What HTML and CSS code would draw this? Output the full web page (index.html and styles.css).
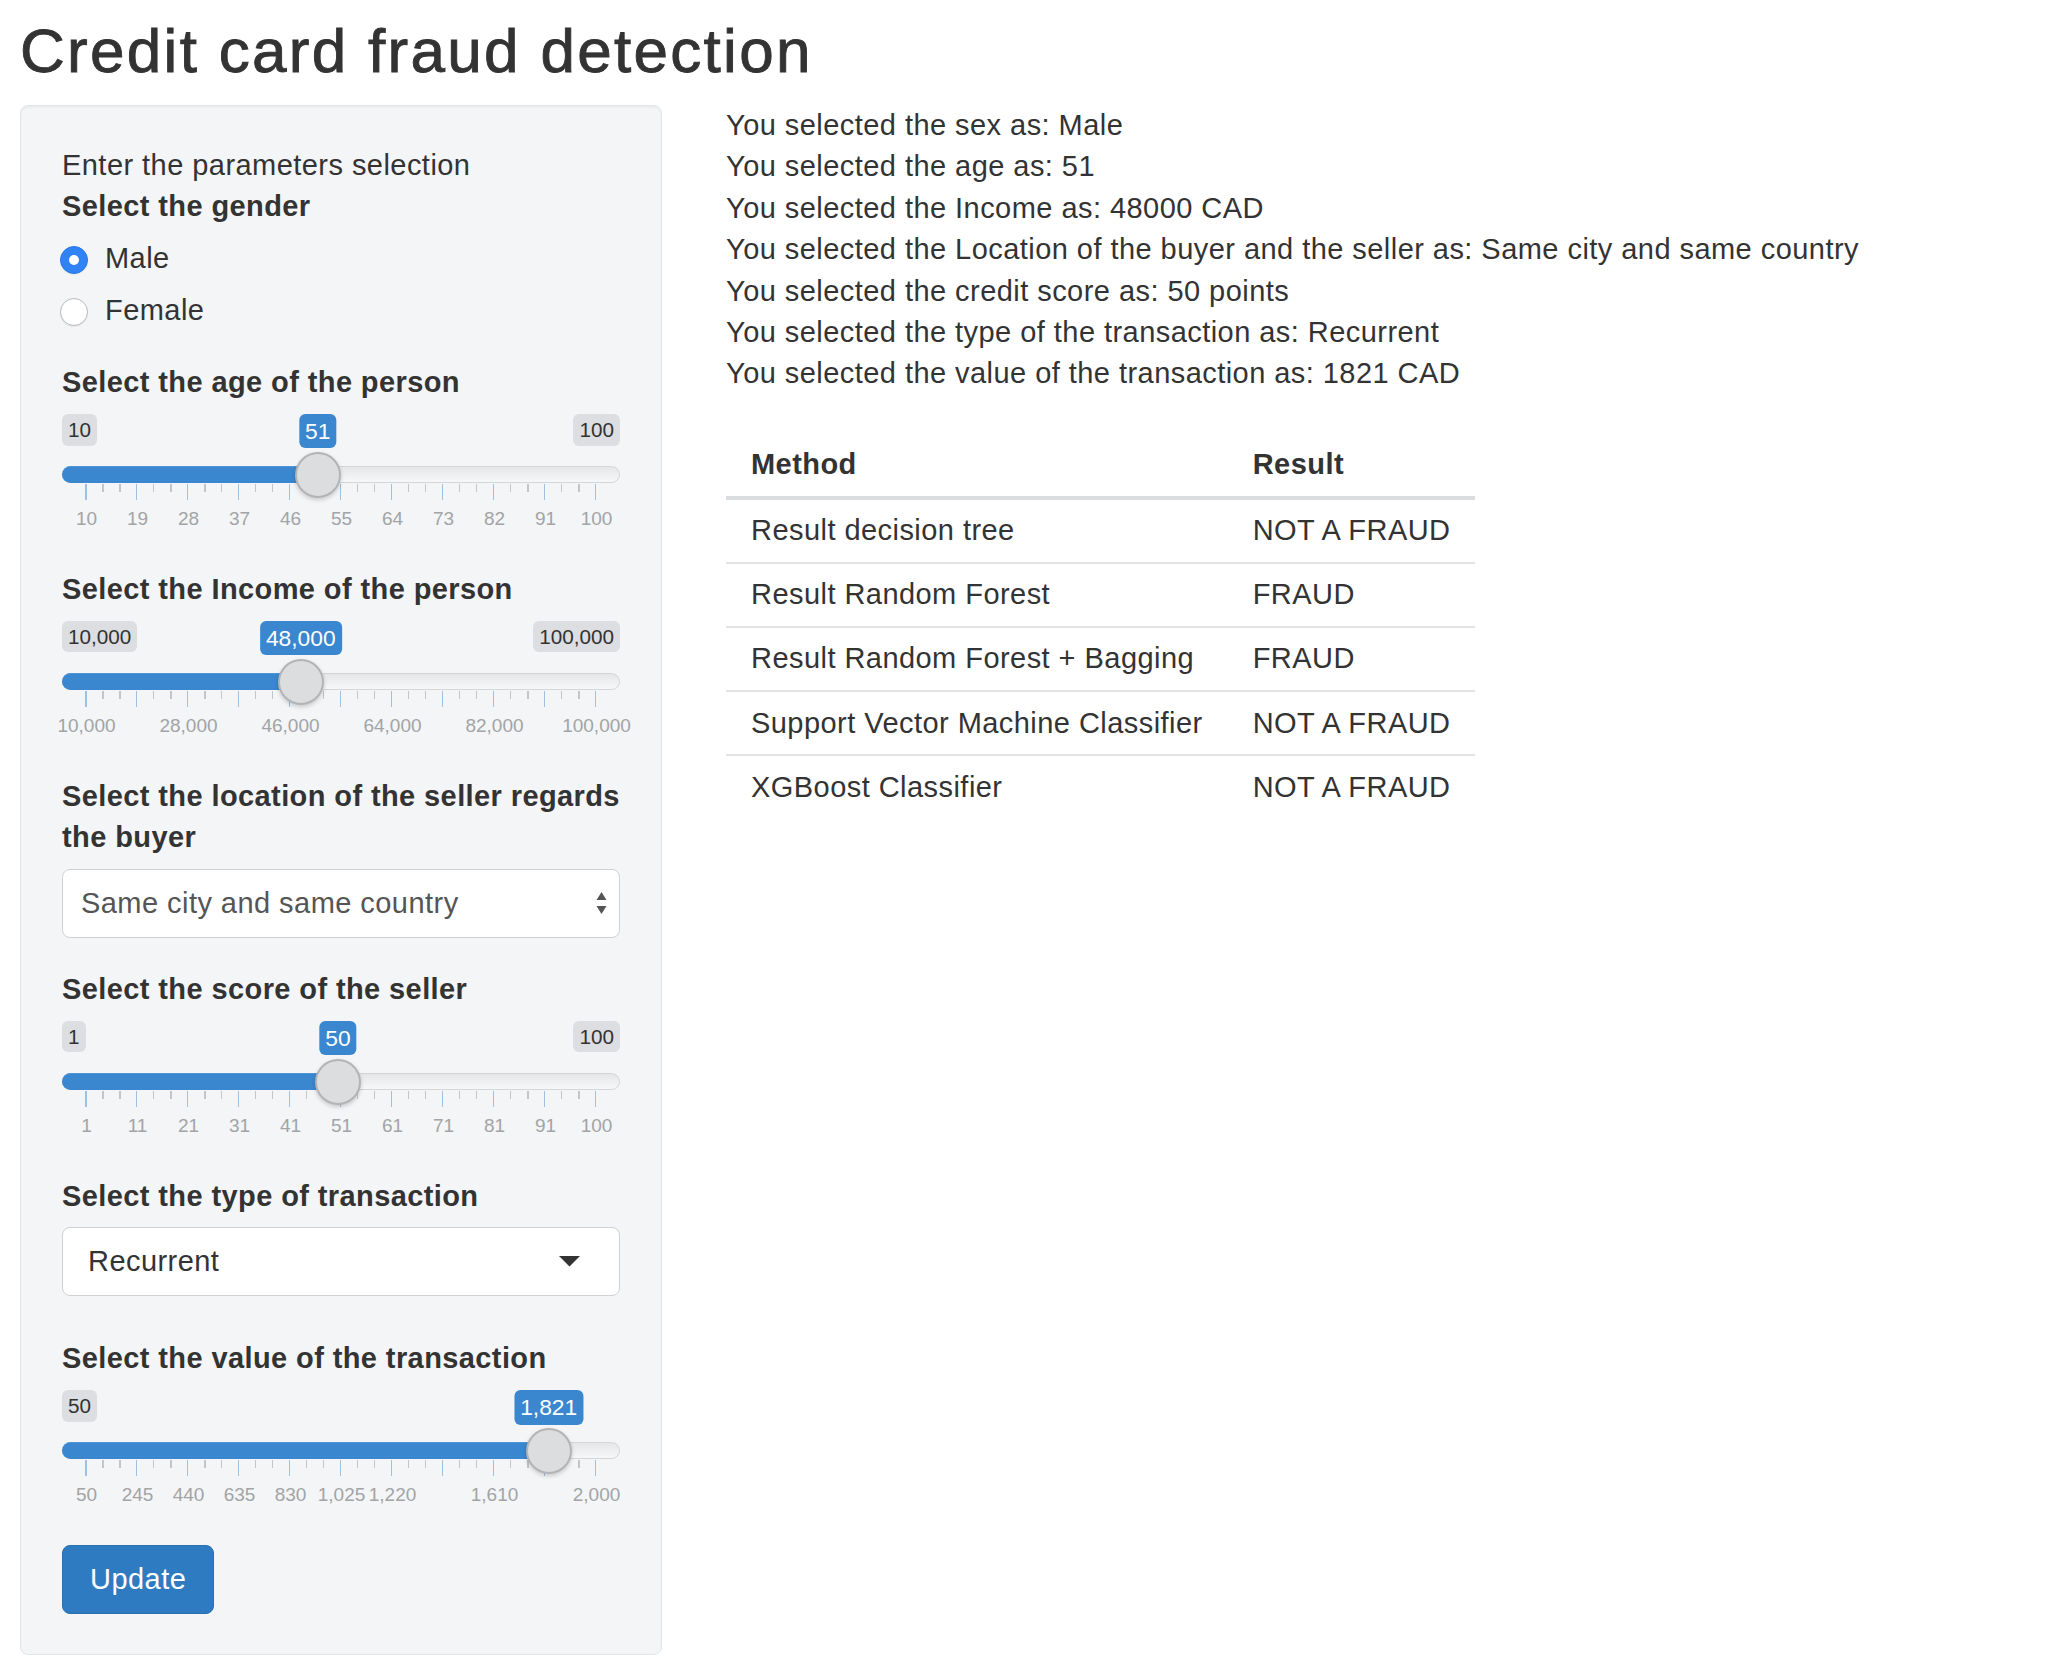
FILE: index.html
```html
<!DOCTYPE html>
<html lang="en">
<head>
<meta charset="utf-8">
<title>Credit card fraud detection</title>
<link rel="stylesheet" href="styles.css">
</head>
<body>
<div class="page">
  <h2 class="title">Credit card fraud detection</h2>
  <div class="row">
    <div class="sidebar">
      <div class="intro">Enter the parameters selection</div>

      <div class="group">
        <label class="ctl-label">Select the gender</label>
        <div class="radio"><span class="radio-dot checked"></span><span>Male</span></div>
        <div class="radio"><span class="radio-dot"></span><span>Female</span></div>
      </div>

      <div class="group">
        <label class="ctl-label">Select the age of the person</label>
        <div class="slider">
          <span class="irs-min">10</span>
          <span class="irs-max">100</span>
          <div class="irs-line"></div>
          <div class="irs-bar" style="width:255.8px"></div>
          <div class="irs-grid"></div>
          <div class="irs-labels">
            <span>10</span><span>19</span><span>28</span><span>37</span><span>46</span><span>55</span><span>64</span><span>73</span><span>82</span><span>91</span><span>100</span>
          </div>
          <span class="irs-single" style="left:255.8px">51</span>
          <span class="irs-handle" style="left:255.8px"></span>
        </div>
      </div>

      <div class="group">
        <label class="ctl-label">Select the Income of the person</label>
        <div class="slider">
          <span class="irs-min">10,000</span>
          <span class="irs-max">100,000</span>
          <div class="irs-line"></div>
          <div class="irs-bar" style="width:238.8px"></div>
          <div class="irs-grid"></div>
          <div class="irs-labels">
            <span>10,000</span><span></span><span>28,000</span><span></span><span>46,000</span><span></span><span>64,000</span><span></span><span>82,000</span><span></span><span>100,000</span>
          </div>
          <span class="irs-single" style="left:238.8px">48,000</span>
          <span class="irs-handle" style="left:238.8px"></span>
        </div>
      </div>

      <div class="group">
        <label class="ctl-label">Select the location of the seller regards the buyer</label>
        <div class="select native">
          <span class="select-text">Same city and same country</span>
          <svg class="updown" width="11" height="23" viewBox="0 0 11 23" aria-hidden="true">
            <path d="M5.5 0 L10.5 8 L0.5 8 Z" fill="#555"/>
            <path d="M0.5 14 L10.5 14 L5.5 22 Z" fill="#555"/>
          </svg>
        </div>
      </div>

      <div class="group">
        <label class="ctl-label">Select the score of the seller</label>
        <div class="slider">
          <span class="irs-min">1</span>
          <span class="irs-max">100</span>
          <div class="irs-line"></div>
          <div class="irs-bar" style="width:275.9px"></div>
          <div class="irs-grid"></div>
          <div class="irs-labels">
            <span>1</span><span>11</span><span>21</span><span>31</span><span>41</span><span>51</span><span>61</span><span>71</span><span>81</span><span>91</span><span>100</span>
          </div>
          <span class="irs-single" style="left:275.9px">50</span>
          <span class="irs-handle" style="left:275.9px"></span>
        </div>
      </div>

      <div class="group group-selectize">
        <label class="ctl-label">Select the type of transaction</label>
        <div class="select selectize">
          <span class="select-text">Recurrent</span>
          <svg class="caret" width="21" height="11" viewBox="0 0 21 11" aria-hidden="true">
            <path d="M0 0 L21 0 L10.5 10.5 Z" fill="#333"/>
          </svg>
        </div>
      </div>

      <div class="group">
        <label class="ctl-label">Select the value of the transaction</label>
        <div class="slider">
          <span class="irs-min">50</span>
          <div class="irs-line"></div>
          <div class="irs-bar" style="width:486.7px"></div>
          <div class="irs-grid"></div>
          <div class="irs-labels">
            <span>50</span><span>245</span><span>440</span><span>635</span><span>830</span><span>1,025</span><span>1,220</span><span></span><span>1,610</span><span></span><span>2,000</span>
          </div>
          <span class="irs-single" style="left:486.7px">1,821</span>
          <span class="irs-handle" style="left:486.7px"></span>
        </div>
      </div>

      <div><button class="btn-primary" type="button">Update</button></div>
    </div>

    <div class="main">
      <div class="line">You selected the sex as: Male</div>
      <div class="line">You selected the age as: 51</div>
      <div class="line">You selected the Income as: 48000 CAD</div>
      <div class="line">You selected the Location of the buyer and the seller as: Same city and same country</div>
      <div class="line">You selected the credit score as: 50 points</div>
      <div class="line">You selected the type of the transaction as: Recurrent</div>
      <div class="line">You selected the value of the transaction as: 1821 CAD</div>

      <table class="results">
        <thead>
          <tr><th>Method</th><th>Result</th></tr>
        </thead>
        <tbody>
          <tr><td>Result decision tree</td><td>NOT A FRAUD</td></tr>
          <tr><td>Result Random Forest</td><td>FRAUD</td></tr>
          <tr><td>Result Random Forest + Bagging</td><td>FRAUD</td></tr>
          <tr><td>Support Vector Machine Classifier</td><td>NOT A FRAUD</td></tr>
          <tr><td>XGBoost Classifier</td><td>NOT A FRAUD</td></tr>
        </tbody>
      </table>
    </div>
  </div>
</div>
</body>
</html>
```

FILE: styles.css
```css
* { box-sizing: border-box; }

html, body {
  margin: 0;
  padding: 0;
  background: #ffffff;
}

body {
  font-family: "Liberation Sans", Arial, Helvetica, sans-serif;
  font-size: 29px;
  line-height: 41.4px;
  letter-spacing: 0.45px;
  color: #333333;
}

.page {
  padding: 17px 0 0 20px;
}

.title {
  margin: 0 0 20px 0;
  font-size: 62px;
  line-height: 68px;
  font-weight: normal;
  letter-spacing: 2.3px;
  color: #333333;
  -webkit-text-stroke: 0.9px #333333;
}

.row {
  display: grid;
  grid-template-columns: 642px 1fr;
  column-gap: 64px;
  align-items: start;
}

/* ---------- sidebar (well) ---------- */
.sidebar {
  background: #f3f5f7;
  border: 1px solid #e2e5e8;
  border-radius: 8px;
  box-shadow: inset 0 2px 2px rgba(0, 0, 0, 0.04);
  padding: 39px 41px 40px 41px;
}

.intro {
  line-height: 41.4px;
}

.group {
  margin-bottom: 31px;
}

.group-selectize {
  margin-bottom: 42px;
}

.ctl-label {
  display: block;
  font-weight: bold;
  line-height: 41.4px;
  margin-bottom: 10.35px;
  letter-spacing: 0.4px;
}

/* radios */
.radio {
  display: flex;
  align-items: flex-start;
  line-height: 41.4px;
}

.radio + .radio {
  margin-top: 10.35px;
}

.radio-dot {
  flex: 0 0 auto;
  width: 28px;
  height: 28px;
  margin: 8px 17px 0 -2px;
  border-radius: 50%;
  background: #ffffff;
  border: 1px solid #b9b9b9;
  box-shadow: 0 1px 1px rgba(0, 0, 0, 0.06);
  position: relative;
}

.radio-dot.checked {
  background: #2f83f4;
  border-color: #2a79e4;
}

.radio-dot.checked::after {
  content: "";
  position: absolute;
  left: 50%;
  top: 50%;
  width: 10px;
  height: 10px;
  margin: -5px 0 0 -5px;
  border-radius: 50%;
  background: #ffffff;
}

/* ---------- range slider ---------- */
.slider {
  position: relative;
  height: 124px;
  letter-spacing: 0;
}

.irs-min,
.irs-max {
  position: absolute;
  top: 0;
  font-size: 20.7px;
  line-height: 27.6px;
  padding: 2px 6px;
  border-radius: 6px;
  background: #dcdee1;
  color: #333333;
}

.irs-min { left: 0; }
.irs-max { right: 0; }

.irs-single {
  position: absolute;
  top: 0;
  transform: translateX(-50%);
  font-size: 22.8px;
  line-height: 30.4px;
  padding: 2px 6px;
  border-radius: 6px;
  background: #3a87d0;
  color: #ffffff;
  white-space: nowrap;
}

.irs-line {
  position: absolute;
  left: 0;
  right: 0;
  top: 52px;
  height: 17px;
  border: 1px solid #d3d6d9;
  border-radius: 9px;
  background: linear-gradient(to bottom, #e4e6e8 0%, #f7f8f9 100%);
}

.irs-bar {
  position: absolute;
  left: 0;
  top: 52px;
  height: 17px;
  border-radius: 9px 0 0 9px;
  background: #3a87d0;
  border-top: 1px solid #4f95d6;
}

.irs-handle {
  position: absolute;
  top: 38px;
  width: 46px;
  height: 46px;
  margin-left: -23px;
  border-radius: 50%;
  background: #dcddde;
  border: 2px solid #b3b4b6;
  box-shadow: 0 2px 4px rgba(0, 0, 0, 0.18);
}

.irs-grid {
  position: absolute;
  left: 23px;
  top: 70px;
  width: 511px;
  height: 16px;
  background-image:
    repeating-linear-gradient(to right, #9dc0e3 0, #9dc0e3 1.5px, transparent 1.5px, transparent 51px),
    repeating-linear-gradient(to right, transparent 0, transparent 17px, #c3c6c9 17px, #c3c6c9 18.5px, transparent 18.5px, transparent 34px, #c3c6c9 34px, #c3c6c9 35.5px, transparent 35.5px, transparent 51px);
  background-size: 100% 16px, 100% 8px;
  background-repeat: no-repeat;
}

.irs-labels {
  position: absolute;
  left: -1px;
  top: 95px;
  display: flex;
  font-size: 19px;
  line-height: 19px;
  color: #a2a4a6;
}

.irs-labels span {
  flex: 0 0 51px;
  width: 51px;
  min-width: 0;
  display: flex;
  justify-content: center;
  white-space: nowrap;
}

/* ---------- selects ---------- */
.select {
  height: 69px;
  background: #ffffff;
  border: 1px solid #cfd1d3;
  border-radius: 8px;
  display: flex;
  align-items: center;
  justify-content: space-between;
}

.select.native {
  padding: 0 12px 0 18px;
  color: #555555;
}

.select.selectize {
  padding: 0 39px 0 25px;
  color: #333333;
}

.updown { display: block; }
.caret { display: block; }

/* ---------- button ---------- */
.btn-primary {
  font-family: inherit;
  font-size: 29px;
  letter-spacing: 0.45px;
  height: 69px;
  padding: 0 27px;
  line-height: 67px;
  color: #ffffff;
  background: #2e7bc2;
  border: 1px solid #2a6fae;
  border-radius: 8px;
  cursor: pointer;
}

/* ---------- main panel ---------- */
.main {
  min-width: 0;
}

.line {
  line-height: 41.4px;
  white-space: nowrap;
}

.results {
  margin-top: 39px;
  border-collapse: collapse;
}

.results th,
.results td {
  text-align: left;
  padding: 10.35px 25px;
  line-height: 41.4px;
  white-space: nowrap;
}

.results th {
  font-weight: bold;
  border-bottom: 4px solid #dadcde;
}

.results td {
  border-top: 2px solid #e1e3e5;
}
```
